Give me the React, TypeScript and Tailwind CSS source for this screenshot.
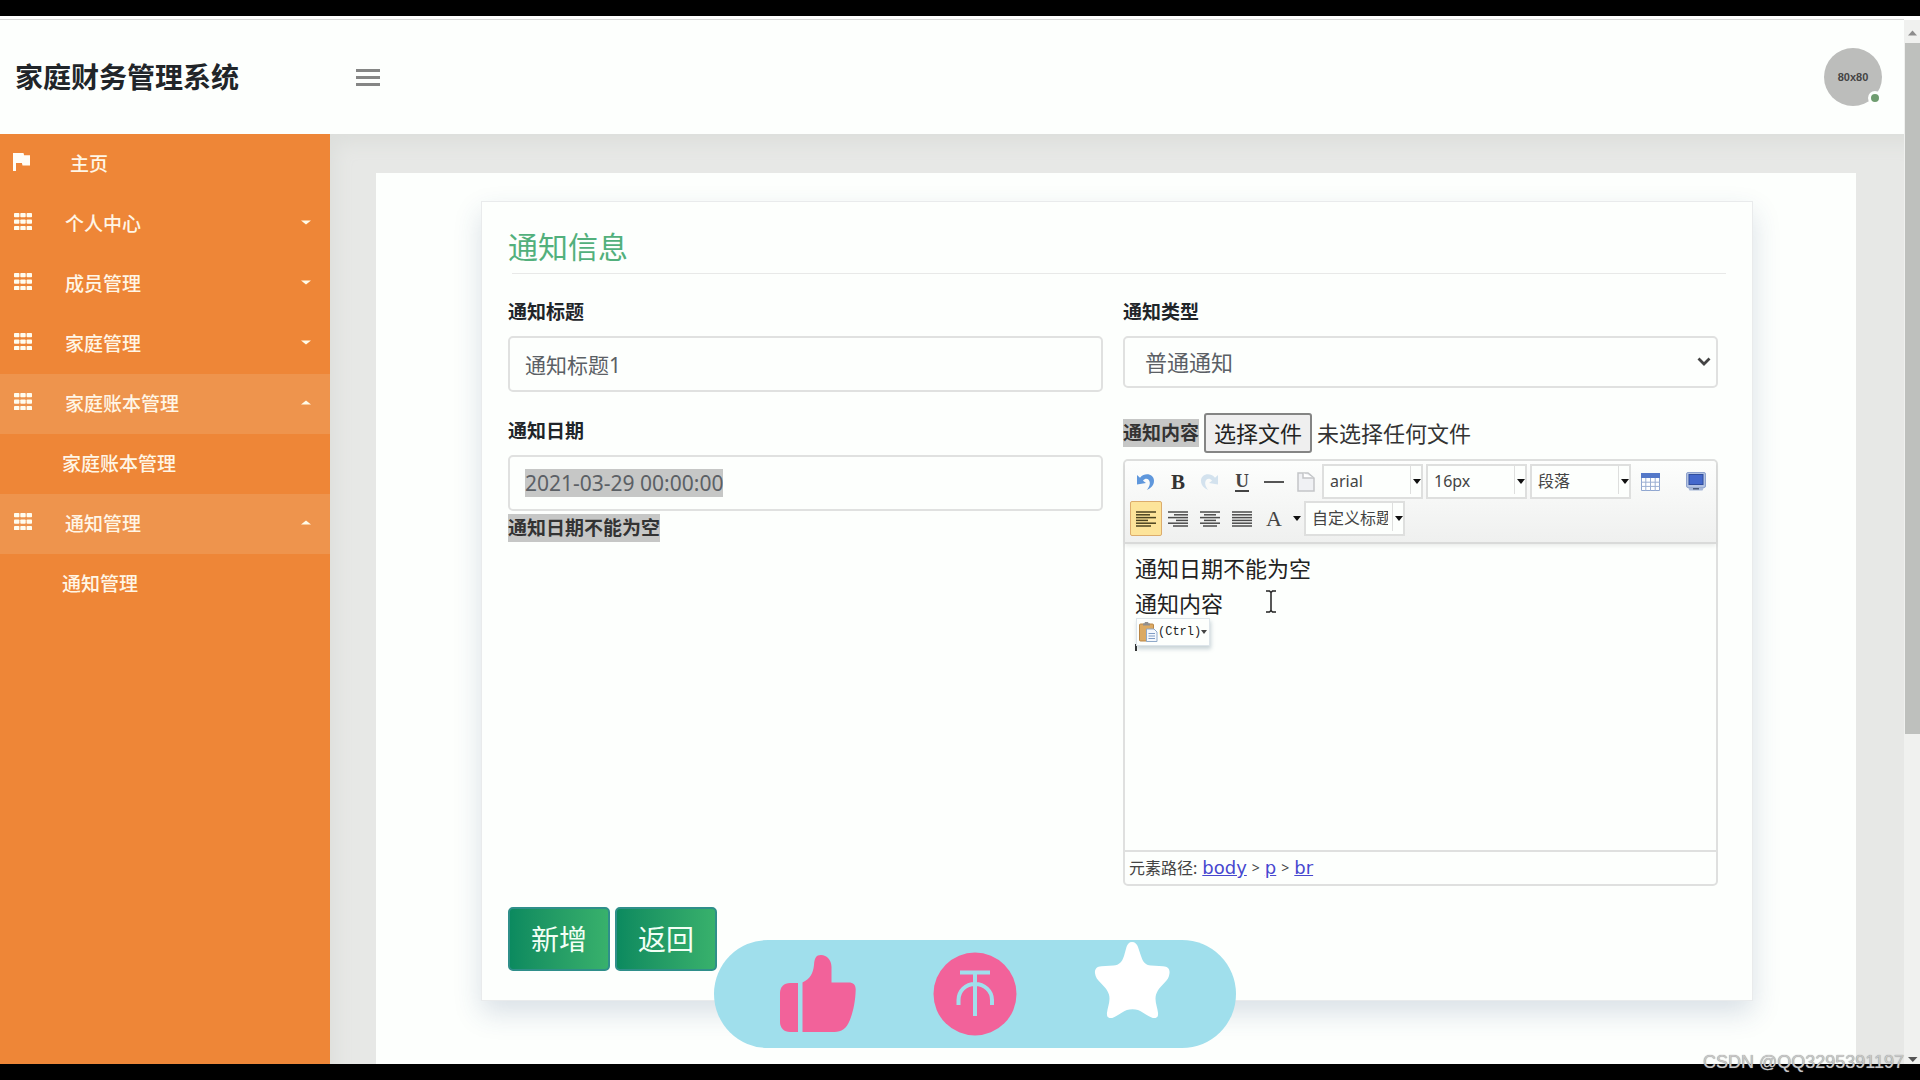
import { useRef, useState } from 'react'
import type { ReactNode } from 'react'

type MenuItem = {
  name: string
  open?: boolean
  children?: string[]
}

const MENU: MenuItem[] = [
  { name: '个人中心' },
  { name: '成员管理' },
  { name: '家庭管理' },
  { name: '家庭账本管理', open: true, children: ['家庭账本管理'] },
  { name: '通知管理', open: true, children: ['通知管理'] },
]

export default function App() {
  return (
    <div className="relative min-h-screen flex flex-col bg-black overflow-hidden font-['Noto_Sans','Noto_Sans_CJK_SC',sans-serif] text-[#212529]">
      <div className="h-4 shrink-0" />
      <div className="flex-1 flex bg-[#fdfffd]">
        <div className="flex-1 min-w-0 flex flex-col">
          <Header />
          <div className="flex-1 flex">
            <Sidebar />
            <main className="flex-1 min-w-0 flex bg-[#e7e8e6] pt-[39px] pl-[46px] pr-12 shadow-[inset_12px_16px_18px_-6px_#dddfdc]">
              <div className="flex-1 min-w-0 bg-[#fdfffd] pt-7 pl-[105px] pr-[103px]">
                <NoticeForm />
              </div>
            </main>
          </div>
        </div>
        <Scrollbar />
      </div>
      <div className="h-4 shrink-0" />

      <Reactions />
      <p className="absolute bottom-[6px] right-4 text-[18px] leading-6 font-['Liberation_Sans',sans-serif] text-[#c8c8c8] [text-shadow:0_0_1px_#777]">
        CSDN @QQ3295391197
      </p>
    </div>
  )
}

function Header() {
  return (
    <header className="relative z-10 h-[118px] border-t-[3px] border-white">
      <div className="h-[115px] flex items-center border-t border-[#d8d9d8] pl-[15px] pr-[22px]">
        <h1 className="w-[341px] text-[28px] leading-10 font-bold">家庭财务管理系统</h1>
        <button type="button" aria-label="菜单" className="flex flex-col gap-1">
          <span className="w-6 h-[3px] bg-[#858685]" />
          <span className="w-6 h-[3px] bg-[#858685]" />
          <span className="w-6 h-[3px] bg-[#858685]" />
        </button>
        <div className="relative ml-auto size-[58px] rounded-full bg-[#bcbdbb] flex items-center justify-center text-[11px] font-bold font-['Liberation_Sans',sans-serif] text-[#444]">
          80x80
          <span className="absolute right-0 bottom-px size-[14px] rounded-full border-[3px] border-[#fdfffd] bg-[#6f9d70]" />
        </div>
      </div>
    </header>
  )
}

function Sidebar() {
  return (
    <nav className="w-[330px] shrink-0 bg-[#ee8637] text-[19px] leading-7 font-medium text-[#fff6e6]">
      <a href="#home" className="h-[60px] flex items-center pl-[13px]">
        <svg viewBox="0 0 18 18" className="w-[18px] h-[18px] -mt-1" fill="#fffdf6">
          <path d="M0 0h10.500l.6 2.200H17v10.300H9.500L8.900 10H3v8H0z" />
        </svg>
        <span className="ml-[39px]">主页</span>
      </a>
      {MENU.map(item => (
        <div key={item.name}>
          <a
            href={`#${item.name}`}
            className={`h-[60px] flex items-center pl-[14px] pr-[19px] ${item.open ? 'bg-[#ee944d]' : ''}`}
          >
            <GridIcon />
            <span className="ml-[33px]">{item.name}</span>
            <svg viewBox="0 0 10 5" className="ml-auto w-[10px] h-[5px] -mt-1" fill="#fffbe8">
              <path d={item.open ? 'M0 4.500 5 .5l5 4z' : 'M0 .5h10L5 4.500z'} />
            </svg>
          </a>
          {item.children?.map(child => (
            <a key={child} href={`#${child}`} className="h-[60px] flex items-center pl-[62px]">
              {child}
            </a>
          ))}
        </div>
      ))}
    </nav>
  )
}

function GridIcon() {
  return (
    <svg viewBox="0 0 18 17" className="w-[18px] h-[17px] -mt-[6px]" fill="#fffdf0">
      {[0, 6.500, 13].map(y =>
        [0, 6.300, 12.600].map(x => <rect key={`${x}-${y}`} x={x} y={y} width="5.400" height="4.200" rx="0.800" />),
      )}
    </svg>
  )
}

function Scrollbar() {
  return (
    <div className="w-4 shrink-0 flex flex-col bg-[#f0f1ef] border-t-4 border-white">
      <svg viewBox="0 0 16 23" className="w-4 h-[23px]">
        <path d="M4 15.500h9l-4.500-5z" fill="#8d8d8d" />
      </svg>
      <div className="h-[66.2%] ml-px bg-[#bec0bd]" />
      <svg viewBox="0 0 16 16" className="w-4 h-4 mt-auto">
        <path d="M4 9h9.500l-4.700 5z" fill="#555" />
      </svg>
    </div>
  )
}

const field = 'w-full rounded-[5px] border-2 border-[#e0e1e0] bg-[#fdfffd] text-[#5b6065]'
const fieldLabel = 'text-[19px] leading-7 font-bold'
const action =
  'h-16 px-[21px] rounded-[5px] border-2 border-[#2f8f8a] bg-gradient-to-r from-[#0b8a5f] to-[#38b16c] text-[28px] leading-10 text-[#f2fff5]'

function NoticeForm() {
  const [title, setTitle] = useState('通知标题1')
  const [date, setDate] = useState('2021-03-29 00:00:00')

  return (
    <form className="border border-[#e9ebec] bg-[#fdfffd] px-[26px] pt-[27px] pb-[29px] shadow-[0_12px_26px_rgba(40,70,120,0.17)]">
      <h2 className="text-[30px] leading-9 text-[#52b07c]">通知信息</h2>
      <hr className="mt-2 ml-1 border-[#e8e9e8]" />
      <div className="mt-6 mr-2 grid grid-cols-2 gap-x-5">
        <div>
          <label htmlFor="title" className={`block ${fieldLabel}`}>通知标题</label>
          <input
            id="title"
            value={title}
            onChange={e => setTitle(e.target.value)}
            className={`mt-[10px] h-14 px-[15px] text-[21px] leading-7 ${field}`}
          />
          <label htmlFor="date" className={`block mt-[25px] ${fieldLabel}`}>通知日期</label>
          <div className={`mt-[10px] h-14 px-[15px] flex items-center ${field}`}>
            <input
              id="date"
              value={date}
              onChange={e => setDate(e.target.value)}
              className="field-sizing-content h-7 bg-[#c6c7c6] text-[21px] leading-7"
            />
          </div>
          <p className={`mt-[3px] w-fit bg-[#c6c7c6] text-[#333] ${fieldLabel}`}>通知日期不能为空</p>
        </div>

        <div>
          <label htmlFor="type" className={`block ${fieldLabel}`}>通知类型</label>
          <div className="relative mt-[10px]">
            <select id="type" className={`block h-[52px] px-5 appearance-none text-[22px] leading-7 ${field}`}>
              <option>普通通知</option>
            </select>
            <svg viewBox="0 0 14 10" className="absolute right-[7px] top-[21px] w-[14px] h-[10px]" fill="none" stroke="#444" strokeWidth="2.800">
              <path d="M1.500 1.500 7 7l5.500-5.500" />
            </svg>
          </div>
          <FilePicker />
          <Editor />
        </div>
      </div>
      <div className="mt-[21px] flex gap-[5px]">
        <button type="submit" className={action}>新增</button>
        <button type="button" className={action}>返回</button>
      </div>
    </form>
  )
}

function FilePicker() {
  const input = useRef<HTMLInputElement>(null)
  return (
    <div className="mt-[25px] flex items-center text-[22px] leading-7">
      <label htmlFor="file" className={`bg-[#c6c7c6] text-[#333] ${fieldLabel}`}>通知内容</label>
      <input ref={input} id="file" type="file" className="hidden" />
      <button
        type="button"
        onClick={() => input.current?.click()}
        className="ml-[5px] h-10 px-2 rounded-[3px] border-2 border-[#848584] bg-[#efefef] text-[#222]"
      >
        选择文件
      </button>
      <span className="ml-[5px] text-[#333]">未选择任何文件</span>
    </div>
  )
}

function Tool({ label, active, children }: { label: string; active?: boolean; children: ReactNode }) {
  return (
    <button
      type="button"
      aria-label={label}
      className={`w-8 h-[35px] flex items-center justify-center ${active ? 'rounded-[2px] border border-[#dcac6c] bg-[#fde49a]' : ''}`}
    >
      {children}
    </button>
  )
}

function Combo({ label, value }: { label: string; value: string }) {
  return (
    <div className="relative w-[101px] h-[35px] mr-[3px] border-2 border-[#dedfde] bg-[#fdfffd]">
      <select aria-label={label} className="block w-[82px] h-[31px] pl-[6px] appearance-none text-[16px] leading-[31px] text-[#444] overflow-hidden">
        <option>{value}</option>
      </select>
      <span className="absolute right-[10px] top-0 h-7 w-px bg-[#dedfde]" />
      <svg viewBox="0 0 8 5" className="absolute right-0 top-[13px] w-2 h-[5px]" fill="#111">
        <path d="M0 0h8L4 5z" />
      </svg>
    </div>
  )
}

// Each entry is [x1, x2] of one text line of the icon.
const ALIGN: { label: string; lines: number[][] }[] = [
  { label: '左对齐', lines: [[0, 20], [0, 14], [0, 20], [0, 12], [0, 20], [0, 15]] },
  { label: '右对齐', lines: [[0, 20], [6, 20], [0, 20], [8, 20], [0, 20], [5, 20]] },
  { label: '居中', lines: [[0, 20], [4, 16], [0, 20], [4, 16], [0, 20], [3, 17]] },
  { label: '两端对齐', lines: [[0, 20], [0, 20], [0, 20], [0, 20], [0, 20], [0, 20]] },
]

function Editor() {
  return (
    <div className="mt-[6px] rounded-[5px] border-2 border-[#dfe0df]">
      <div className="pt-[3px] pl-[5px] pr-1 pb-[6px] rounded-t-[4px] bg-gradient-to-b from-[#fdfefd] to-[#eff0ef] border-b-2 border-[#d9dad9] shadow-[0_2px_4px_rgba(0,0,0,0.08)]">
        <div className="flex">
          <Tool label="撤销">
            <svg viewBox="0 0 20 20" className="w-5 h-5">
              <path d="M1 3v9.500l9-1.500-3-2.300c2.500-3.200 6.500-2 6.800 2 .2 2.700-1.300 5-3 7.300 4-1.600 7.200-4.500 7.200-9.200C18 2.500 9.500-.5 4 5.700z" fill="#5f97dc" />
            </svg>
          </Tool>
          <Tool label="加粗">
            <span className="text-[21px] leading-7 font-bold font-['Liberation_Serif',serif] text-[#333]">B</span>
          </Tool>
          <Tool label="重做">
            <svg viewBox="0 0 20 20" className="w-5 h-5">
              <path d="M18 3v9.500L9 11l3-2.300c-2.500-3.200-6.500-2-6.800 2-.2 2.700 1.300 5 3 7.300C4.200 16.400 1 13.500 1 8.800 1 2.500 9.500-.5 15 5.700z" fill="#d3e2ee" />
            </svg>
          </Tool>
          <Tool label="下划线">
            <span className="w-[14px] border-b-2 border-[#444] text-[19px] leading-[19px] font-bold font-['Liberation_Serif',serif] text-[#444] text-center">U</span>
          </Tool>
          <Tool label="分隔线">
            <span className="w-5 h-[2px] bg-[#555]" />
          </Tool>
          <Tool label="清空文档">
            <svg viewBox="0 0 18 20" className="w-[18px] h-5">
              <path d="M1 1h10l6 5v13H1z" fill="#f0f1f4" stroke="#c3c5c8" strokeWidth="1.500" />
              <path d="M6 1v5h11" fill="#fff" stroke="#c3c5c8" strokeWidth="1.500" />
            </svg>
          </Tool>
          <Combo label="字体" value="arial" />
          <Combo label="字号" value="16px" />
          <Combo label="段落格式" value="段落" />
          <Tool label="表格">
            <svg viewBox="0 0 19 18" className="w-[19px] h-[18px]">
              <path d="M.5.500h18v17H.500z" fill="#fff" stroke="#8fa6d0" />
              <path d="M0 0h19v5H0z" fill="#5478c8" />
              <path d="M0 9.200h19M0 13.400h19M4.800 5v13M9.500 5v13M14.200 5v13" stroke="#9cafd2" />
            </svg>
          </Tool>
          <span className="ml-auto">
            <Tool label="预览">
              <svg viewBox="0 0 20 19" className="w-5 h-[19px]">
                <rect x="0.500" y="0.500" width="19" height="15" rx="1.500" fill="#b4c3e2" stroke="#8ea2cd" />
                <rect x="3" y="2.500" width="14" height="10" fill="#4468cc" stroke="#314e9d" />
                <path d="M2 15.500h16l-1.500 3h-13z" fill="#a6b7d8" />
                <path d="M7 16h6v1.500H7z" fill="#4b5a7a" />
              </svg>
            </Tool>
          </span>
        </div>
        <div className="mt-[2px] flex">
          {ALIGN.map(({ label, lines }, i) => (
            <Tool key={label} label={label} active={i === 0}>
              <svg viewBox="0 0 20 16" className="w-5 h-4" stroke={i === 0 ? '#4b431f' : '#4b4b4b'} strokeWidth="1.500">
                {lines.map(([x1, x2], n) => (
                  <path key={n} d={`M${x1} ${1 + n * 2.800}H${x2}`} />
                ))}
              </svg>
            </Tool>
          ))}
          <button type="button" aria-label="字体颜色" className="h-[35px] w-[46px] pl-2 pr-[3px] flex items-center justify-between">
            <span className="text-[22px] leading-7 font-['Liberation_Serif',serif] text-[#444]">A</span>
            <svg viewBox="0 0 8 5" className="w-2 h-[5px]" fill="#111">
              <path d="M0 0h8L4 5z" />
            </svg>
          </button>
          <Combo label="自定义标题" value="自定义标题" />
        </div>
      </div>

      <div className="relative h-[306px] pt-[7px] pl-[10px] text-[22px] leading-[35px] text-[#222]">
        <p>通知日期不能为空</p>
        <p>通知内容</p>
        <div className="absolute left-[10px] top-[100px] h-[7px] w-[2px] bg-[#333]" />
        <button
          type="button"
          className="absolute left-[11px] top-[74px] h-7 px-[2px] flex items-center border border-[#dde5ea] bg-[#fdfffd] text-[12px] font-['Liberation_Mono',monospace] shadow-[1px_3px_4px_rgba(80,110,130,0.3)]"
        >
          <svg viewBox="0 0 19 20" className="w-[19px] h-5">
            <rect x="0.500" y="2" width="14" height="17" rx="1" fill="#dcaa62" stroke="#b98645" />
            <path d="M4 3.500h7V1.500H9.500a2 2 0 0 0-4 0H4z" fill="#8f8f8f" />
            <path d="M7.500 7h7.500l3 3v9.500H7.500z" fill="#f4f8fd" stroke="#8fa9c8" />
            <path d="M9.500 11.500h6.500M9.500 14h6.500M9.500 16.500h6.500" stroke="#7f9cc4" />
          </svg>
          <span>(Ctrl)</span>
          <svg viewBox="0 0 6 4" className="w-[6px] h-1" fill="#444">
            <path d="M0 0h6L3 4z" />
          </svg>
        </button>
        <svg viewBox="0 0 10 23" className="absolute left-[141px] top-[46px] w-[10px] h-[23px]" fill="none" stroke="#222" strokeWidth="1.500">
          <path d="M0 1h3.500L5 2.500 6.500 1H10M5 2v19M0 22h3.500L5 20.500 6.500 22H10" />
        </svg>
      </div>

      <div className="h-[34px] pl-1 flex items-center gap-[5px] border-t-2 border-[#dfe0df] text-[16px] leading-6 text-[#444]">
        <span>元素路径:</span>
        <PathLink name="body" />
        <span className="text-[14px]">&gt;</span>
        <PathLink name="p" />
        <span className="text-[14px]">&gt;</span>
        <PathLink name="br" />
      </div>
    </div>
  )
}

function PathLink({ name }: { name: string }) {
  return (
    <a href={`#${name}`} className="text-[18px] font-['DejaVu_Sans',sans-serif] text-[#4747cf] underline">
      {name}
    </a>
  )
}

function Reactions() {
  return (
    <div className="absolute left-[714px] bottom-8 w-[522px] h-[108px] rounded-full bg-[#a0dfec]">
      <svg viewBox="0 0 522 108" className="w-full h-full">
        {/* thumb up */}
        <g fill="#f2629a">
          <path d="M84 43v49h-8c-6 0-10-4-10-10V53c0-6 4-10 10-10z" />
          <path d="M88.500 92V42.500C96 39 99 34 100 25c.5-7 2-10 7-10 6 0 10.500 5 10.500 12v15.500h17c5 0 7.200 2.500 7.200 7-.3 12-2.700 23-6 31-3.200 8-8.200 11.500-15.200 11.500z" />
        </g>
        {/* coin */}
        <circle cx="261" cy="54" r="41.500" fill="#f2629a" />
        <g fill="none" stroke="#a0dfec" strokeWidth="4">
          <path d="M246 32.500h30M261 33v43M244.500 65v-5c0-9 7-16 16.500-16s17 7 17 16v5" />
        </g>
        {/* star */}
        <path
          d="M418 2c3 0 5 2 6 5l3 9c2 6 4 9 10 9.500l12 .7c5 .3 7 3 6.500 7-.4 4-2 6.500-5 9.500-6 6-9 10-9 16 0 5 2 9 2.500 14 .6 5-2.500 6.500-7 4.500-7-3-10-8-18.500-8s-12 5-18.500 8c-4.500 2-7.600.5-7-4.500.5-5 2.500-9 2.500-14 0-6-3-10-9-16-3-3-5-5.500-5.500-9.500-.4-4 1.500-6.700 6.500-7l12-.7c6-.5 8.500-3.500 10.500-9.500l2.500-9c1-3 2.500-5 5.500-5z"
          fill="#fff"
        />
      </svg>
    </div>
  )
}
